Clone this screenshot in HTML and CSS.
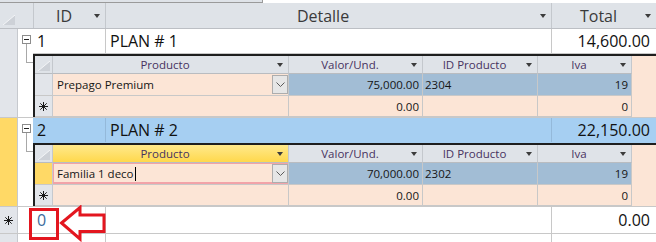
FILE: index.html
```html
<!DOCTYPE html>
<html lang="es">
<head>
    <meta charset="UTF-8">
    <meta name="viewport" content="width=device-width, initial-scale=1.0">
    <title>Planes</title>
    <link rel="stylesheet" href="styles.css">
</head>
<body>
    <div class="tabs"><span class="tab-edge"></span></div>

    <div class="sheet">
        <!-- main header -->
        <div class="head">
            <div class="corner">
                <svg width="12" height="10" viewBox="0 0 12 10"><polygon points="0,10 12,0 12,10" fill="#cdd1d7"/><line x1="0" y1="10" x2="12" y2="0" stroke="#f4f5f7"/></svg>
            </div>
            <div class="hcell c-id"><span>ID</span><i class="arrow"></i></div>
            <div class="hcell c-det"><span>Detalle</span><i class="arrow"></i></div>
            <div class="hcell c-tot"><span>Total</span><i class="arrow"></i></div>
        </div>

        <!-- record 1 -->
        <div class="record">
            <div class="selector"></div>
            <div class="expander">
                <div class="toggle"></div>
                <div class="stem"></div>
            </div>
            <div class="record-body">
                <div class="row">
                    <div class="cell c-id">1</div>
                    <div class="cell c-det">PLAN # 1</div>
                    <div class="cell c-tot">14,600.00</div>
                </div>
                <div class="sub">
                    <div class="sub-head">
                        <div class="s-corner">
                            <svg width="12" height="10" viewBox="0 0 12 10"><polygon points="0,10 12,0 12,10" fill="#cdd1d7"/><line x1="0" y1="10" x2="12" y2="0" stroke="#f4f5f7"/></svg>
                        </div>
                        <div class="s-hcell s-prod"><span>Producto</span><i class="arrow"></i></div>
                        <div class="s-hcell s-val"><span>Valor/Und.</span><i class="arrow"></i></div>
                        <div class="s-hcell s-idp"><span>ID Producto</span><i class="arrow"></i></div>
                        <div class="s-hcell s-iva"><span>Iva</span><i class="arrow"></i></div>
                    </div>
                    <div class="sub-row">
                        <div class="s-sel"></div>
                        <div class="s-cell s-prod">
                            <span class="txt">Prepago Premium</span>
                            <span class="combo"><svg width="9" height="5" viewBox="0 0 9 5"><polyline points="0.5,0.5 4.5,4.5 8.5,0.5" fill="none" stroke="#5a5a5a"/></svg></span>
                        </div>
                        <div class="s-cell s-val data num">75,000.00</div>
                        <div class="s-cell s-idp data">2304</div>
                        <div class="s-cell s-iva data num">19</div>
                    </div>
                    <div class="sub-row new">
                        <div class="s-sel">
                            <svg width="9" height="9" viewBox="0 0 9 9"><path d="M4.5 0V9M0 4.5H9M1.3 1.3L7.7 7.7M7.7 1.3L1.3 7.7" stroke="#1a1a1a"/></svg>
                        </div>
                        <div class="s-cell s-prod"></div>
                        <div class="s-cell s-val num">0.00</div>
                        <div class="s-cell s-idp"></div>
                        <div class="s-cell s-iva num">0</div>
                    </div>
                </div>
            </div>
        </div>

        <!-- record 2 (current) -->
        <div class="record">
            <div class="selector current"></div>
            <div class="expander">
                <div class="toggle"></div>
                <div class="stem"></div>
            </div>
            <div class="record-body">
                <div class="row selected">
                    <div class="cell c-id">2</div>
                    <div class="cell c-det">PLAN # 2</div>
                    <div class="cell c-tot">22,150.00</div>
                </div>
                <div class="sub">
                    <div class="sub-head">
                        <div class="s-corner">
                            <svg width="12" height="10" viewBox="0 0 12 10"><polygon points="0,10 12,0 12,10" fill="#cdd1d7"/><line x1="0" y1="10" x2="12" y2="0" stroke="#f4f5f7"/></svg>
                        </div>
                        <div class="s-hcell s-prod active"><span>Producto</span><i class="arrow"></i></div>
                        <div class="s-hcell s-val"><span>Valor/Und.</span><i class="arrow"></i></div>
                        <div class="s-hcell s-idp"><span>ID Producto</span><i class="arrow"></i></div>
                        <div class="s-hcell s-iva"><span>Iva</span><i class="arrow"></i></div>
                    </div>
                    <div class="sub-row">
                        <div class="s-sel current"></div>
                        <div class="s-cell s-prod focus">
                            <span class="txt">Familia 1 deco<i class="caret"></i></span>
                            <span class="combo"><svg width="9" height="5" viewBox="0 0 9 5"><polyline points="0.5,0.5 4.5,4.5 8.5,0.5" fill="none" stroke="#5a5a5a"/></svg></span>
                        </div>
                        <div class="s-cell s-val data num">70,000.00</div>
                        <div class="s-cell s-idp data">2302</div>
                        <div class="s-cell s-iva data num">19</div>
                    </div>
                    <div class="sub-row new">
                        <div class="s-sel">
                            <svg width="9" height="9" viewBox="0 0 9 9"><path d="M4.5 0V9M0 4.5H9M1.3 1.3L7.7 7.7M7.7 1.3L1.3 7.7" stroke="#1a1a1a"/></svg>
                        </div>
                        <div class="s-cell s-prod"></div>
                        <div class="s-cell s-val num">0.00</div>
                        <div class="s-cell s-idp"></div>
                        <div class="s-cell s-iva num">0</div>
                    </div>
                </div>
            </div>
        </div>

        <!-- new record -->
        <div class="record new-record">
            <div class="selector">
                <svg width="9" height="9" viewBox="0 0 9 9"><path d="M4.5 0V9M0 4.5H9M1.3 1.3L7.7 7.7M7.7 1.3L1.3 7.7" stroke="#1a1a1a"/></svg>
            </div>
            <div class="expander"></div>
            <div class="record-body">
                <div class="row">
                    <div class="cell c-id new-id">0</div>
                    <div class="cell c-det"></div>
                    <div class="cell c-tot">0.00</div>
                </div>
            </div>
        </div>

        <div class="record tail">
            <div class="selector"></div>
            <div class="expander"></div>
            <div class="record-body">
                <div class="row">
                    <div class="cell c-id"></div>
                    <div class="cell c-det"></div>
                    <div class="cell c-tot"></div>
                </div>
            </div>
        </div>

        <!-- annotation -->
        <div class="mark-box"></div>
        <svg class="mark-arrow" width="50" height="40" viewBox="0 0 50 40"><polygon points="3.5,18 22,2.5 22,10 46,10 46,26.5 22,26.5 22,34" fill="#fff" stroke="#e3161f" stroke-width="3" stroke-linejoin="miter"/></svg>
    </div>
</body>
</html>
```

FILE: styles.css
```css
* {
    box-sizing: border-box;
}
body {
    margin: 0;
    width: 656px;
    height: 242px;
    overflow: hidden;
    background-color: #fff;
    font-family: 'Open Sans', 'Noto Sans', sans-serif;
    color: #111;
}
.tabs {
    display: flex;
    height: 3px;
    background-color: #fff;
}
.tab-edge {
    width: 263px;
    background-color: #dfe3e8;
    border-right: 1px solid #9a9a9a;
    border-bottom: 1px solid #9a9a9a;
}
.sheet {
    position: relative;
}

/* main header */
.head {
    display: flex;
    height: 26px;
    background-color: #dfe3e8;
    border-bottom: 1px solid #bcbfc4;
}
.corner {
    width: 34px;
    display: flex;
    align-items: flex-end;
    padding: 0 0 3px 3px;
    border-right: 1px solid #c4c8cd;
}
.hcell {
    display: flex;
    align-items: center;
    font-size: 16px;
    color: #3a3a3a;
    border-right: 1px solid #c4c8cd;
}
.hcell span {
    flex: 1;
    text-align: center;
}
.head .c-id {
    width: 72px;
}
.head .c-det {
    width: 446px;
}
.head .c-tot {
    flex: 1;
    border-right: none;
}
.arrow {
    width: 0;
    height: 0;
    margin-right: 5px;
    border-left: 3px solid transparent;
    border-right: 3px solid transparent;
    border-top: 4px solid #3c3c3c;
}

/* records */
.record {
    display: flex;
    border-bottom: 1px solid #c8c8c8;
}
.selector {
    width: 18px;
    display: flex;
    align-items: center;
    justify-content: center;
    background-color: #e2e5ea;
    border-right: 1px solid #c6c9ce;
}
.selector.current {
    background-color: #ffd966;
}
.expander {
    width: 15px;
    background-color: #fff;
}
.toggle {
    width: 9px;
    height: 9px;
    margin: 6px 0 0 4px;
    display: flex;
    align-items: center;
    justify-content: center;
    background-color: #fff;
    border: 1px solid #8c8c8c;
}
.toggle::before {
    content: "";
    width: 5px;
    height: 1px;
    background-color: #222;
}
.stem {
    width: 7px;
    height: 19px;
    margin-left: 8px;
    border-left: 1px solid #a8a8a8;
    border-bottom: 1px solid #a8a8a8;
}
.record-body {
    flex: 1;
    display: flex;
    flex-direction: column;
}
.row {
    display: flex;
    height: 25px;
    font-size: 16px;
    border-bottom: 1px solid #c8c8c8;
}
.cell {
    display: flex;
    align-items: center;
    padding: 0 4px;
    border-right: 1px solid #c8c8c8;
}
.row .c-id {
    width: 73px;
}
.row .c-det {
    width: 446px;
}
.row .c-tot {
    flex: 1;
    justify-content: flex-end;
    padding-right: 6px;
    border-right: none;
}
.row.selected {
    background-color: #a6cff2;
    border-bottom-color: #a6cff2;
}
.row.selected .cell {
    border-right-color: #94b9da;
}
.new-record .row {
    height: 26px;
    border-bottom: none;
}
.new-id {
    color: #3b6b9c;
}
.tail .row {
    border-bottom: none;
}

/* subdatasheet */
.sub {
    display: flex;
    flex-direction: column;
    font-size: 11.5px;
    background-color: #fce5d6;
    border-top: 2px solid #1e1e1e;
    border-left: 2px solid #1e1e1e;
}
.sub-head,
.sub-row {
    display: flex;
    height: 18px;
}
.sub-row {
    height: 22px;
}
.sub-row.new {
    height: 21px;
}
.s-corner {
    width: 18px;
    display: flex;
    align-items: flex-end;
    padding: 0 0 2px 3px;
    background-color: #dfe3e8;
    border-right: 1px solid #c4c8cd;
    border-bottom: 1px solid #b9bcc0;
}
.s-hcell {
    display: flex;
    align-items: center;
    color: #47325f;
    background-color: #dfe3e8;
    border-right: 1px solid #c4c8cd;
    border-bottom: 1px solid #b9bcc0;
}
.s-hcell span {
    flex: 1;
    text-align: center;
}
.s-hcell.active {
    background: linear-gradient(#ffe98c, #ffd84c);
}
.s-prod {
    width: 236px;
}
.s-val {
    width: 134px;
}
.s-idp {
    width: 115px;
}
.s-iva {
    width: 94px;
}
.s-sel {
    width: 18px;
    display: flex;
    align-items: center;
    justify-content: center;
    background-color: #e2e5ea;
    border-right: 1px solid #c6c9ce;
    border-bottom: 1px solid #c8c8c8;
}
.s-sel.current {
    background-color: #ffd966;
}
.s-cell {
    display: flex;
    align-items: center;
    padding: 0 2px;
    color: #151515;
    border-right: 1px solid #c8c8c8;
    border-bottom: 1px solid #c8c8c8;
}
.s-cell.data {
    background-color: #a2bdd5;
}
.s-cell.num {
    justify-content: flex-end;
    padding-right: 3px;
}
.s-prod.s-cell {
    padding: 1px 0 1px 4px;
    align-items: stretch;
}
.txt {
    flex: 1;
    display: flex;
    align-items: center;
}
.combo {
    width: 16px;
    display: flex;
    align-items: center;
    justify-content: center;
    background-color: #e6e6e6;
    border: 1px solid #adadad;
}
.focus {
    box-shadow: inset 0 0 0 1px #f2a3a8, inset 0 -2px 0 #f2a3a8;
}
.caret {
    display: inline-block;
    width: 1px;
    height: 14px;
    margin-left: 1px;
    background-color: #000;
}

/* annotation */
.mark-box {
    position: absolute;
    left: 29px;
    top: 205px;
    width: 30px;
    height: 32px;
    border: 3px solid #e3161f;
}
.mark-arrow {
    position: absolute;
    left: 58px;
    top: 202px;
}
```
